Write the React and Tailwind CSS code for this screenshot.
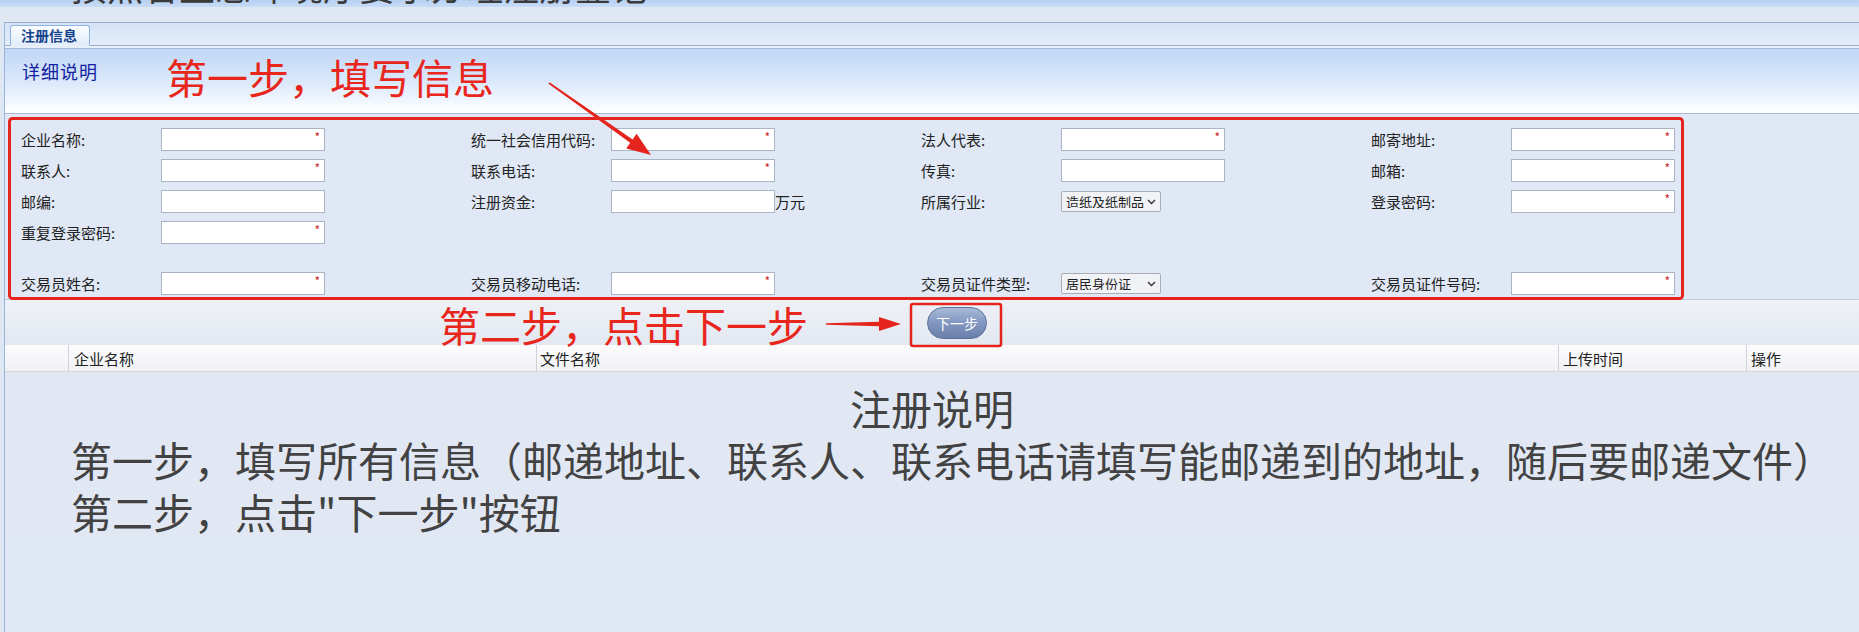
import React from 'react';

const FONT = "font-['Noto_Sans_CJK_SC','Noto_Sans',sans-serif]";

function TextBox({ req }) {
  return (
    <div className="relative h-[23px] w-[164px] shrink-0 border border-[#a9b4c4] bg-white">
      {req ? (
        <span className="absolute right-[4px] top-[2px] text-[12px] leading-none text-[#c8232c]">*</span>
      ) : null}
    </div>
  );
}

function SelectBox({ text }) {
  return (
    <div className="flex h-[21px] w-[100px] shrink-0 items-center overflow-hidden rounded-[2px] border border-[#a9adb4] bg-[#f1f2f5] pl-[4px] pr-[4px]">
      <span className="flex-1 overflow-hidden whitespace-nowrap text-[13px] leading-none text-[#222]">{text}</span>
      <svg width="9" height="6" viewBox="0 0 9 6" className="ml-[2px] shrink-0">
        <path d="M1 1 L4.5 4.5 L8 1" fill="none" stroke="#333" strokeWidth="1.4" />
      </svg>
    </div>
  );
}

function Field({ label, children }) {
  return (
    <div className="flex w-[450px] items-center">
      <div className="w-[140px] shrink-0 text-[15px] leading-none text-[#222]">{label}</div>
      {children}
    </div>
  );
}

function Row({ children, tall = true }) {
  return <div className={tall ? 'flex h-[31px] items-center' : 'h-[20px]'}>{children}</div>;
}

export default function App() {
  return (
    <div className={`relative h-[632px] w-[1859px] overflow-hidden bg-[#dfe7f3] ${FONT}`}>
      {/* cut-off page title */}
      <div className="flex h-[7px] items-end overflow-hidden bg-gradient-to-b from-[#b7d0f2] to-[#c8dcf6] pl-[71px]">
        <span className="whitespace-nowrap text-[36px] leading-[44px] text-[#3a3a3a]">按照省生态环境厅要求办理注册登记</span>
      </div>
      <div className="h-[15px] bg-[#dfe7f3]" />

      <div className="flex">
        <div className="w-[4px] shrink-0" />
        <div className="min-h-[610px] flex-1 border-l border-[#99b5de] bg-[#e0e8f5]">
          {/* tab strip */}
          <div className="flex h-[24px] items-end border-y border-[#9aaecb] bg-gradient-to-b from-[#d5e3f6] to-[#e3ecf9] pl-[5px]">
            <div className="-mb-px h-[21px] w-[80px] rounded-t-[3px] border border-[#8db2e3] border-b-[#e4edf9] bg-gradient-to-b from-[#fbfdff] to-[#e2ecf9] pl-[10px] text-[14px] font-bold leading-[19px] text-[#15428b]">
              注册信息
            </div>
          </div>
          <div className="h-[2px] bg-[#e8eff9]" />

          {/* header */}
          <div className="h-[66px] border-y border-[#a9bad6] bg-gradient-to-b from-[#c0d7f6] via-[#dae8fb] to-white pl-[17px] pt-[11px]">
            <span className="text-[18px] leading-none tracking-[1px] text-[#1222a0]">详细说明</span>
          </div>

          {/* form */}
          <div className="border-b border-[#c6cedb] bg-[#e0e8f5] pl-[16px] pt-[10px]">
            <Row>
              <Field label="企业名称:"><TextBox req /></Field>
              <Field label="统一社会信用代码:"><TextBox req /></Field>
              <Field label="法人代表:"><TextBox req /></Field>
              <Field label="邮寄地址:"><TextBox req /></Field>
            </Row>
            <Row>
              <Field label="联系人:"><TextBox req /></Field>
              <Field label="联系电话:"><TextBox req /></Field>
              <Field label="传真:"><TextBox /></Field>
              <Field label="邮箱:"><TextBox req /></Field>
            </Row>
            <Row>
              <Field label="邮编:"><TextBox /></Field>
              <Field label="注册资金:">
                <TextBox />
                <span className="mt-[4px] self-start text-[15px] leading-none text-[#222]">万元</span>
              </Field>
              <Field label="所属行业:"><SelectBox text="造纸及纸制品" /></Field>
              <Field label="登录密码:"><TextBox req /></Field>
            </Row>
            <Row>
              <Field label="重复登录密码:"><TextBox req /></Field>
            </Row>
            <Row tall={false} />
            <Row>
              <Field label="交易员姓名:"><TextBox req /></Field>
              <Field label="交易员移动电话:"><TextBox req /></Field>
              <Field label="交易员证件类型:"><SelectBox text="居民身份证" /></Field>
              <Field label="交易员证件号码:"><TextBox req /></Field>
            </Row>
          </div>

          {/* next step */}
          <div className="flex h-[45px] items-center bg-gradient-to-b from-[#eef1f6] to-[#e3e8f1] pl-[922px]">
            <div className="flex h-[32px] w-[60px] items-center justify-center rounded-full border border-[#5f7299] bg-gradient-to-b from-[#a9bad8] via-[#8197c1] to-[#6a80ab] text-[14px] leading-none text-white">
              下一步
            </div>
          </div>

          {/* file table header */}
          <div className="flex h-[27px] border-b border-[#d3d6db] bg-gradient-to-b from-[#fcfcfd] to-[#f0f1f3] text-[15px] leading-none text-[#222]">
            <div className="w-[63px] shrink-0" />
            <div className="flex w-[468px] shrink-0 items-center border-l border-[#cfd2d6] pl-[5px]">企业名称</div>
            <div className="flex w-[1022px] shrink-0 items-center border-l border-[#cfd2d6] pl-[3px]">文件名称</div>
            <div className="flex w-[188px] shrink-0 items-center border-l border-[#cfd2d6] pl-[4px]">上传时间</div>
            <div className="flex flex-1 items-center border-l border-[#cfd2d6] pl-[4px]">操作</div>
          </div>

          {/* notes */}
          <div className="bg-[#e1e8f4] pt-[9px] text-[41px] leading-[52px] text-[#424242]">
            <div className="text-center">注册说明</div>
            <div className="whitespace-nowrap pl-[66px]">第一步，填写所有信息（邮递地址、联系人、联系电话请填写能邮递到的地址，随后要邮递文件）</div>
            <div className="whitespace-nowrap pl-[66px]">第二步，点击"下一步"按钮</div>
          </div>
        </div>
      </div>

      {/* red annotations */}
      <div className="pointer-events-none absolute left-[166px] top-[56px] whitespace-nowrap text-[41px] leading-none text-[#e8261c]">
        第一步，填写信息
      </div>
      <div className="pointer-events-none absolute left-[439px] top-[304px] whitespace-nowrap text-[41px] leading-none text-[#e8261c]">
        第二步，点击下一步
      </div>
      <svg className="pointer-events-none absolute left-0 top-0" width="1859" height="632" viewBox="0 0 1859 632">
        <rect x="9.5" y="118.5" width="1673" height="180" rx="3" fill="none" stroke="#e5251d" strokeWidth="3" />
        <rect x="911" y="304" width="90" height="42" rx="2" fill="none" stroke="#e5251d" strokeWidth="2.5" />
        <polygon
          points="548.5,83.7 630.2,142.8 626.2,148.6 651,155 636.6,133.8 632.6,139.6 549.5,82.3"
          fill="#e5251d"
        />
        <polygon points="826,323.2 879,321.8 879,317 901,324 879,331 879,326.2 826,324.8" fill="#e5251d" />
      </svg>
    </div>
  );
}
